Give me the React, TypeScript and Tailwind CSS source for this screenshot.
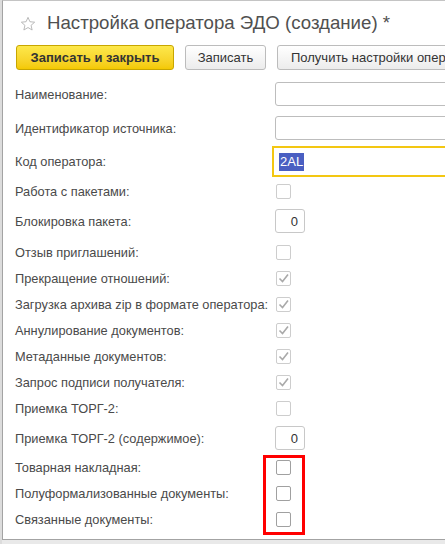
import React from 'react';

type Kind = 'input' | 'focus' | 'num' | 'cb' | 'cbc' | 'cbd';

const rows: { label: string; kind: Kind; mt: string }[] = [
  { label: 'Наименование:', kind: 'input', mt: 'mt-[12px]' },
  { label: 'Идентификатор источника:', kind: 'input', mt: 'mt-[10px]' },
  { label: 'Код оператора:', kind: 'focus', mt: 'mt-[6px]' },
  { label: 'Работа с пакетами:', kind: 'cb', mt: 'mt-[7px]' },
  { label: 'Блокировка пакета:', kind: 'num', mt: 'mt-[10px]' },
  { label: 'Отзыв приглашений:', kind: 'cb', mt: 'mt-[12px]' },
  { label: 'Прекращение отношений:', kind: 'cbc', mt: 'mt-[11px]' },
  { label: 'Загрузка архива zip в формате оператора:', kind: 'cbc', mt: 'mt-[11px]' },
  { label: 'Аннулирование документов:', kind: 'cbc', mt: 'mt-[11px]' },
  { label: 'Метаданные документов:', kind: 'cbc', mt: 'mt-[11px]' },
  { label: 'Запрос подписи получателя:', kind: 'cbc', mt: 'mt-[11px]' },
  { label: 'Приемка ТОРГ-2:', kind: 'cb', mt: 'mt-[11px]' },
  { label: 'Приемка ТОРГ-2 (содержимое):', kind: 'num', mt: 'mt-[10px]' },
  { label: 'Товарная накладная:', kind: 'cbd', mt: 'mt-[10px]' },
  { label: 'Полуформализованные документы:', kind: 'cbd', mt: 'mt-[11px]' },
  { label: 'Связанные документы:', kind: 'cbd', mt: 'mt-[11px]' },
];

function Control({ kind }: { kind: Kind }) {
  if (kind === 'input') {
    return <div className="h-[24px] w-[200px] shrink-0 rounded-[3px] border border-[#bdbdbd] bg-white" />;
  }
  if (kind === 'focus') {
    return (
      <div className="-ml-[3px] flex h-[31px] w-[200px] shrink-0 items-center border-2 border-[#f3c712] bg-white pl-[5px]">
        <span className="bg-[#4a5fc2] px-[1px] text-[13px] leading-[18px] text-white">2AL</span>
      </div>
    );
  }
  if (kind === 'num') {
    return (
      <div className="flex h-[24px] w-[30px] shrink-0 items-center justify-end rounded-[3px] border border-[#c8c8c8] bg-white pr-[6px] text-[13px] leading-none text-[#333]">
        0
      </div>
    );
  }
  const border = kind === 'cbd' ? 'border-[#a0a0a0]' : 'border-[#cdcdcd]';
  return (
    <div className={`ml-[1px] flex h-[15px] w-[15px] shrink-0 items-center justify-center rounded-[2px] border bg-white ${border}`}>
      {kind === 'cbc' && (
        <svg width="13" height="13" viewBox="0 0 13 13">
          <polyline points="2.5,6.5 5.5,9.5 11,2.5" fill="none" stroke="#a9a9a9" strokeWidth="1.6" />
        </svg>
      )}
    </div>
  );
}

export default function App() {
  return (
    <div className="relative h-[544px] w-[445px] overflow-hidden bg-[#e9e9e9] font-['Liberation_Sans',Arial,sans-serif]">
      <div className="absolute left-0 top-0 h-[544px] w-[2px] bg-[#dcdcdc]" />
      <div className="ml-[2px] h-[540px] w-[470px] border border-[#a3a3a3] border-t-[#c4c4c4] bg-white">
        <div className="flex h-[44px] items-center pl-[17px]">
          <svg width="16" height="16" viewBox="0 0 24 24" className="mt-[1px] shrink-0">
            <polygon
              points="12,2 14.9,8.6 22,9.3 16.6,14 18.2,21 12,17.3 5.8,21 7.4,14 2,9.3 9.1,8.6"
              fill="none"
              stroke="#b5b5b5"
              strokeWidth="1.4"
              strokeLinejoin="round"
            />
          </svg>
          <span className="ml-[11px] whitespace-nowrap text-[18.67px] leading-none text-[#505050]">
            Настройка оператора ЭДО (создание) *
          </span>
        </div>
        <div className="flex h-[25px] items-stretch gap-[11px] pl-[13px]">
          <div className="flex w-[158px] shrink-0 items-center justify-center rounded-[3px] border border-[#c8a600] bg-gradient-to-b from-[#fde84a] to-[#f4c900] text-[13px] font-bold text-[#333]">
            Записать и закрыть
          </div>
          <div className="flex w-[81px] shrink-0 items-center justify-center rounded-[3px] border border-[#bcbcbc] bg-gradient-to-b from-white to-[#ececec] text-[13px] text-[#333]">
            Записать
          </div>
          <div className="flex w-[240px] shrink-0 items-center justify-start whitespace-nowrap rounded-[3px] border border-[#bcbcbc] bg-gradient-to-b from-white to-[#ececec] pl-[13px] text-[13px] text-[#333]">
            Получить настройки оператора
          </div>
        </div>
        <div className="flex flex-col">
          {rows.map((r) => (
            <div key={r.label} className={`flex items-center ${r.mt}`}>
              <div className="w-[272px] shrink-0 whitespace-nowrap pl-[12px] text-[12.8px] leading-[15px] text-[#4a4a4a]">
                {r.label}
              </div>
              <Control kind={r.kind} />
            </div>
          ))}
        </div>
      </div>
      <div className="absolute left-[263px] top-[455px] h-[80px] w-[42px] border-[3px] border-[#ff0000]" />
    </div>
  );
}
